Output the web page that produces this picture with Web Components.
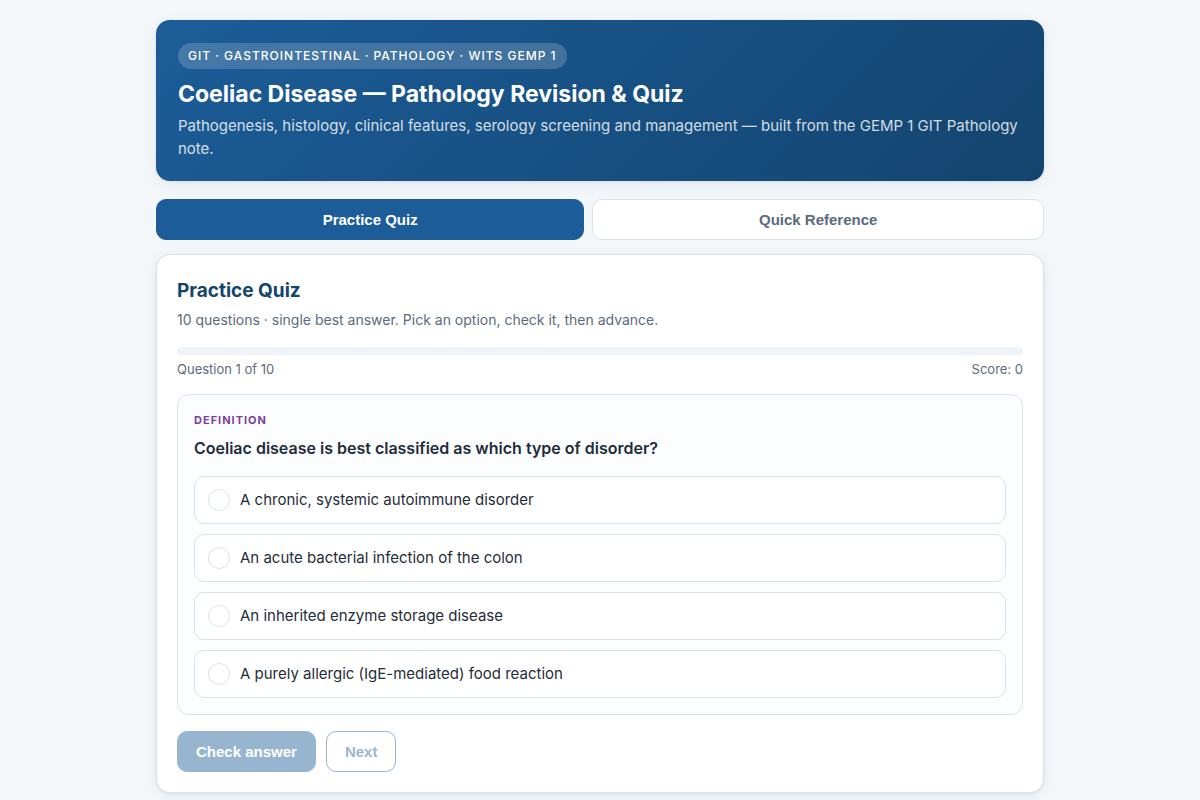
<!DOCTYPE html>
<html lang="en">
<head>
<meta charset="UTF-8">
<meta name="viewport" content="width=device-width, initial-scale=1.0">
<title>Coeliac Disease — Pathology Revision &amp; Quiz</title>
<style>
  :root {
    --bg: #f3f7fa;
    --primary: #1c5d99;
    --primary-dark: #13446e;
    --accent: #7b3fa0;
    --ink: #1f2d3a;
    --muted: #5b6b7c;
    --line: #d8e2ec;
    --track: #edf3f7;
    --shadow: 0 1px 3px rgba(20, 50, 90, 0.08), 0 4px 16px rgba(20, 50, 90, 0.06);
  }
  * { box-sizing: border-box; }
  body {
    margin: 0;
    background: var(--bg);
    color: var(--ink);
    font-family: Inter, "Liberation Sans", sans-serif;
    font-size: 16px;
    line-height: 24px;
  }
  main {
    max-width: 920px;
    margin: 0 auto;
    padding: 20px 16px 60px;
  }
</style>
</head>
<body>
<main>
  <page-hero>
    <span slot="tag">GIT · Gastrointestinal · Pathology · Wits GEMP 1</span>
    <span slot="title">Coeliac Disease — Pathology Revision &amp; Quiz</span>
    Pathogenesis, histology, clinical features, serology screening and management — built from the GEMP 1 GIT Pathology note.
  </page-hero>
  <tab-bar tabs="Practice Quiz|Quick Reference"></tab-bar>
  <quiz-card>
    <span slot="title">Practice Quiz</span>
    <span slot="intro">10 questions · single best answer. Pick an option, check it, then advance.</span>
    <quiz-progress current="1" total="10" score="0"></quiz-progress>
    <quiz-question
      topic="Definition"
      question="Coeliac disease is best classified as which type of disorder?"
      options="A chronic, systemic autoimmune disorder|An acute bacterial infection of the colon|An inherited enzyme storage disease|A purely allergic (IgE-mediated) food reaction"
    ></quiz-question>
    <quiz-actions></quiz-actions>
  </quiz-card>
</main>

<script>
class PageHero extends HTMLElement {
  constructor() {
    super();
    this.attachShadow({ mode: 'open' });

    this.shadowRoot.innerHTML = `
            <style>
                :host {
                    display: block;
                    padding: 23px 22px 21px;
                    border-radius: 14px;
                    background: linear-gradient(135deg, var(--primary), var(--primary-dark));
                    box-shadow: var(--shadow);
                    color: #fff;
                }
                .tag {
                    display: inline-block;
                    padding: 4px 10px;
                    border-radius: 999px;
                    background: rgba(255, 255, 255, 0.18);
                    font-size: 12px;
                    font-weight: 500;
                    line-height: 18px;
                    letter-spacing: 1px;
                    text-transform: uppercase;
                    vertical-align: top;
                }
                h1 {
                    margin: 10px 0 5px;
                    font-size: 23px;
                    font-weight: 700;
                    line-height: 30px;
                }
                p {
                    margin: 0;
                    font-size: 15px;
                    line-height: 23px;
                    opacity: 0.8;
                }
            </style>
            <header>
                <div class="tag"><slot name="tag"></slot></div>
                <h1><slot name="title"></slot></h1>
                <p><slot></slot></p>
            </header>
        `;
  }
}

class TabBar extends HTMLElement {
  constructor() {
    super();
    this.attachShadow({ mode: 'open' });

    this.shadowRoot.innerHTML = `
            <style>
                :host {
                    display: block;
                    margin: 18px 0 14px;
                }
                .tabs {
                    display: flex;
                    flex-wrap: wrap;
                    gap: 8px;
                }
                button {
                    flex: 1 1 auto;
                    padding: 11px 14px;
                    border: 1px solid var(--line);
                    border-radius: 10px;
                    background: #fff;
                    color: var(--muted);
                    font-family: "Liberation Sans", Arial, sans-serif;
                    font-size: 15px;
                    font-weight: 600;
                    line-height: 17px;
                    cursor: pointer;
                }
                button[aria-selected="true"] {
                    background: var(--primary);
                    border-color: var(--primary);
                    color: #fff;
                }
            </style>
            <div class="tabs" role="tablist"></div>
        `;
  }

  connectedCallback() {
    const list = this.shadowRoot.querySelector('.tabs');
    this.getAttribute('tabs').split('|').forEach((name, i) => {
      const button = document.createElement('button');
      button.type = 'button';
      button.setAttribute('role', 'tab');
      button.setAttribute('aria-selected', i === 0);
      button.textContent = name;
      button.addEventListener('click', () => this.select(button));
      list.appendChild(button);
    });
  }

  select(button) {
    this.shadowRoot.querySelectorAll('button').forEach((b) => {
      b.setAttribute('aria-selected', b === button);
    });
  }
}

class QuizCard extends HTMLElement {
  constructor() {
    super();
    this.attachShadow({ mode: 'open' });

    this.shadowRoot.innerHTML = `
            <style>
                :host {
                    display: block;
                    padding: 20px;
                    border: 1px solid var(--line);
                    border-radius: 14px;
                    background: #fff;
                    box-shadow: var(--shadow);
                }
                h2 {
                    margin: 0 0 2px;
                    color: var(--primary-dark);
                    font-size: 19px;
                    font-weight: 700;
                    line-height: 32px;
                }
                p {
                    margin: 0 0 16px;
                    color: var(--muted);
                    font-size: 14px;
                    line-height: 22px;
                }
            </style>
            <section>
                <h2><slot name="title"></slot></h2>
                <p><slot name="intro"></slot></p>
                <slot></slot>
            </section>
        `;
  }

  connectedCallback() {
    this.addEventListener('option-picked', () => {
      this.querySelector('quiz-actions').enableCheck();
    });
  }
}

class QuizProgress extends HTMLElement {
  constructor() {
    super();
    this.attachShadow({ mode: 'open' });

    this.shadowRoot.innerHTML = `
            <style>
                :host {
                    display: block;
                    margin-bottom: 14px;
                }
                .track {
                    height: 8px;
                    border-radius: 999px;
                    background: var(--track);
                    overflow: hidden;
                }
                .fill {
                    width: 0;
                    height: 100%;
                    background: var(--primary);
                }
                .meta {
                    display: flex;
                    justify-content: space-between;
                    margin-top: 4px;
                    color: var(--muted);
                    font-size: 13px;
                    line-height: 21px;
                }
            </style>
            <div class="track"><div class="fill"></div></div>
            <div class="meta">
                <span id="count"></span>
                <span id="score"></span>
            </div>
        `;
  }

  connectedCallback() {
    const current = Number(this.getAttribute('current'));
    const total = Number(this.getAttribute('total'));
    this.shadowRoot.querySelector('.fill').style.width = `${((current - 1) / total) * 100}%`;
    this.shadowRoot.getElementById('count').textContent = `Question ${current} of ${total}`;
    this.shadowRoot.getElementById('score').textContent = `Score: ${this.getAttribute('score')}`;
  }
}

class QuizQuestion extends HTMLElement {
  constructor() {
    super();
    this.attachShadow({ mode: 'open' });

    this.shadowRoot.innerHTML = `
            <style>
                :host {
                    display: block;
                    padding: 16px;
                    border: 1px solid var(--line);
                    border-radius: 12px;
                    background: #fcfdff;
                }
                fieldset {
                    margin: 0;
                    padding: 0;
                    border: 0;
                    min-width: 0;
                }
                .topic {
                    color: var(--accent);
                    font-size: 11px;
                    font-weight: 700;
                    line-height: 18px;
                    letter-spacing: 1px;
                    text-transform: uppercase;
                }
                .question {
                    margin: 6px 0 15px;
                    font-size: 16px;
                    font-weight: 600;
                    line-height: 26px;
                }
                .options {
                    display: grid;
                    gap: 10px;
                }
                label {
                    display: flex;
                    align-items: center;
                    gap: 10px;
                    padding: 11px 13px;
                    border: 1px solid var(--line);
                    border-radius: 10px;
                    background: #fff;
                    font-size: 15px;
                    line-height: 24px;
                    cursor: pointer;
                }
                label:hover,
                label:has(input:checked) {
                    border-color: var(--primary);
                }
                input {
                    appearance: none;
                    flex: none;
                    box-sizing: border-box;
                    width: 22px;
                    height: 22px;
                    margin: 0;
                    border: 1px solid var(--line);
                    border-radius: 50%;
                    background: #fff;
                }
                input:checked {
                    border: 6px solid var(--primary);
                }
            </style>
            <div class="topic" id="topic"></div>
            <div class="question" id="question"></div>
            <fieldset aria-labelledby="question">
                <div class="options"></div>
            </fieldset>
        `;
  }

  connectedCallback() {
    this.shadowRoot.getElementById('topic').textContent = this.getAttribute('topic');
    this.shadowRoot.getElementById('question').textContent = this.getAttribute('question');

    const options = this.shadowRoot.querySelector('.options');
    this.getAttribute('options').split('|').forEach((text, i) => {
      const label = document.createElement('label');
      label.htmlFor = `option-${i}`;
      label.innerHTML = `<input type="radio" name="answer" id="option-${i}" value="${i}"><span></span>`;
      label.querySelector('span').textContent = text;
      options.appendChild(label);
    });

    options.addEventListener('change', () => {
      this.dispatchEvent(new CustomEvent('option-picked', { bubbles: true }));
    });
  }
}

class QuizActions extends HTMLElement {
  constructor() {
    super();
    this.attachShadow({ mode: 'open' });

    this.shadowRoot.innerHTML = `
            <style>
                :host {
                    display: flex;
                    flex-wrap: wrap;
                    gap: 10px;
                    margin-top: 16px;
                }
                button {
                    padding: 11px 18px;
                    border: 1px solid var(--primary);
                    border-radius: 10px;
                    background: var(--primary);
                    color: #fff;
                    font-family: "Liberation Sans", Arial, sans-serif;
                    font-size: 15px;
                    font-weight: 600;
                    line-height: 17px;
                    cursor: pointer;
                }
                button.ghost {
                    background: #fff;
                    color: var(--primary);
                }
                button:disabled {
                    opacity: 0.45;
                    cursor: not-allowed;
                }
            </style>
            <button type="button" id="check" disabled>Check answer</button>
            <button type="button" id="next" class="ghost" disabled>Next</button>
        `;

    this.shadowRoot.getElementById('check').addEventListener('click', () => {
      this.shadowRoot.getElementById('check').disabled = true;
      this.shadowRoot.getElementById('next').disabled = false;
    });
  }

  enableCheck() {
    this.shadowRoot.getElementById('check').disabled = false;
  }
}

customElements.define('page-hero', PageHero);
customElements.define('tab-bar', TabBar);
customElements.define('quiz-card', QuizCard);
customElements.define('quiz-progress', QuizProgress);
customElements.define('quiz-question', QuizQuestion);
customElements.define('quiz-actions', QuizActions);
</script>
</body>
</html>
